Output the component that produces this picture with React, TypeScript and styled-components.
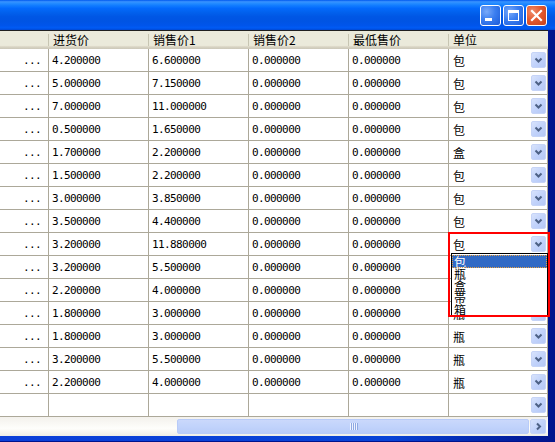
import React from 'react';
import styled, { createGlobalStyle } from 'styled-components';

const GlobalStyle = createGlobalStyle`
  html, body {
    margin: 0;
    padding: 0;
    background: #ffffff;
  }
  body {
    width: 555px;
    height: 442px;
    overflow: hidden;
  }
`;

const CJK = `"Noto Sans CJK SC", "Noto Sans", sans-serif`;
const MONO = `"DejaVu Sans Mono", "Liberation Mono", monospace`;

type Row = [string, string, string, string, string];

const rows: Row[] = [
    ['4.200000', '6.600000', '0.000000', '0.000000', '包'],
    ['5.000000', '7.150000', '0.000000', '0.000000', '包'],
    ['7.000000', '11.000000', '0.000000', '0.000000', '包'],
    ['0.500000', '1.650000', '0.000000', '0.000000', '包'],
    ['1.700000', '2.200000', '0.000000', '0.000000', '盒'],
    ['1.500000', '2.200000', '0.000000', '0.000000', '包'],
    ['3.000000', '3.850000', '0.000000', '0.000000', '包'],
    ['3.500000', '4.400000', '0.000000', '0.000000', '包'],
    ['3.200000', '11.880000', '0.000000', '0.000000', '包'],
    ['3.200000', '5.500000', '0.000000', '0.000000', '瓶'],
    ['2.200000', '4.000000', '0.000000', '0.000000', '瓶'],
    ['1.800000', '3.000000', '0.000000', '0.000000', '瓶'],
    ['1.800000', '3.000000', '0.000000', '0.000000', '瓶'],
    ['3.200000', '5.500000', '0.000000', '0.000000', '瓶'],
    ['2.200000', '4.000000', '0.000000', '0.000000', '瓶'],
];

const headers = ['', '进货价', '销售价1', '销售价2', '最低售价', '单位'];
const units = ['包', '瓶', '盒', '帯', '箱'];
const OPEN_ROW = 8;

const Chevron = ({ dir = 'down' }: { dir?: 'down' | 'right' }) => (
    <svg width="9" height="9" viewBox="0 0 9 9">
        {dir === 'down' ? (
            <polyline points="1.5,2.5 4.5,5.5 7.5,2.5" fill="none" stroke="#4d6185" strokeWidth="2" />
        ) : (
            <polyline points="3,1.5 6,4.5 3,7.5" fill="none" stroke="#4d6185" strokeWidth="2" />
        )}
    </svg>
);

export default function App() {
    return (
        <>
            <GlobalStyle />
            <Frame>
                <TitleBar>
                    <CaptionButton>
                        <MinGlyph />
                    </CaptionButton>
                    <CaptionButton>
                        <MaxGlyph />
                    </CaptionButton>
                    <CaptionButton $close>
                        <svg width="13" height="13" viewBox="0 0 13 13">
                            <path d="M2 2 L11 11 M11 2 L2 11" stroke="#fff" strokeWidth="2.2" strokeLinecap="square" />
                        </svg>
                    </CaptionButton>
                </TitleBar>
                <Client>
                    <Grid>
                        <HeaderRow>
                            {headers.map((h, i) => (
                                <HeaderCell key={i}>{h}</HeaderCell>
                            ))}
                        </HeaderRow>
                        {rows.map((r, ri) => (
                            <DataRow key={ri}>
                                <Cell $align="right">
                                    <Num>...</Num>
                                </Cell>
                                {r.slice(0, 4).map((v, ci) => (
                                    <Cell key={ci}>
                                        <Num>{v}</Num>
                                    </Cell>
                                ))}
                                <ComboCell>
                                    <UnitText>{r[4]}</UnitText>
                                    <DropButton>
                                        <Chevron />
                                    </DropButton>
                                    {ri === OPEN_ROW && (
                                        <>
                                            <DropList>
                                                {units.map((u, ui) => (
                                                    <ListItem key={u} $selected={ui === 0}>
                                                        {u}
                                                    </ListItem>
                                                ))}
                                            </DropList>
                                            <Highlight />
                                        </>
                                    )}
                                </ComboCell>
                            </DataRow>
                        ))}
                        <DataRow>
                            <Cell />
                            <Cell />
                            <Cell />
                            <Cell />
                            <Cell />
                            <ComboCell>
                                <UnitText />
                                <DropButton>
                                    <Chevron />
                                </DropButton>
                            </ComboCell>
                        </DataRow>
                    </Grid>
                    <HScroll>
                        <Track />
                        <Thumb>
                            <Gripper>
                                <i />
                                <i />
                                <i />
                                <i />
                            </Gripper>
                        </Thumb>
                        <ArrowButton>
                            <Chevron dir="right" />
                        </ArrowButton>
                    </HScroll>
                </Client>
            </Frame>
        </>
    );
}

const Frame = styled.div`
    width: 555px;
    height: 442px;
    display: flex;
    flex-direction: column;
    box-sizing: border-box;
    padding: 0 7px 6px 0;
    background: linear-gradient(to right, #0a3fd8 0%, #0843d6 70%, #00138c 100%);
    box-shadow: inset 0 -1px 0 #00138c;
`;

const TitleBar = styled.div`
    height: 30px;
    margin-right: -7px;
    display: flex;
    justify-content: flex-end;
    align-items: flex-start;
    gap: 1px;
    padding: 5px 8px 0 0;
    box-sizing: border-box;
    background: linear-gradient(
        to bottom,
        #0058ee 0%,
        #3a93ff 6%,
        #288eff 10%,
        #127dff 18%,
        #0369fc 28%,
        #0262ee 40%,
        #0057e5 55%,
        #0054e3 70%,
        #0055eb 85%,
        #005bf5 93%,
        #0048d4 100%
    );
`;

const CaptionButton = styled.div<{ $close?: boolean }>`
    width: 21px;
    height: 21px;
    box-sizing: border-box;
    border: 1px solid #ffffff;
    border-radius: 3px;
    margin-left: 1px;
    display: flex;
    align-items: center;
    justify-content: center;
    position: relative;
    background: ${(p) =>
        p.$close
            ? 'radial-gradient(circle at 30% 30%, #f08d6c 0%, #e35a30 45%, #c8401a 100%)'
            : 'radial-gradient(circle at 30% 30%, #7aaaf9 0%, #3b7ef0 45%, #1c5bd8 100%)'};
`;

const MinGlyph = styled.span`
    position: absolute;
    left: 4px;
    bottom: 4px;
    width: 7px;
    height: 3px;
    background: #ffffff;
`;

const MaxGlyph = styled.span`
    width: 11px;
    height: 11px;
    box-sizing: border-box;
    border: 1px solid #ffffff;
    border-top-width: 3px;
`;

const Client = styled.div`
    flex: 1;
    display: flex;
    flex-direction: column;
    background: #ffffff;
    border-top: 1px solid #202020;
`;

const Grid = styled.div`
    display: flex;
    flex-direction: column;
`;

const HeaderRow = styled.div`
    height: 18px;
    display: grid;
    grid-template-columns: 49px 100px 100px 100px 100px 99px;
    background: linear-gradient(to bottom, #ebeadb 0%, #ebeadb 80%, #e2decd 84%, #d6d2c2 90%, #cbc7b8 100%);
`;

const HeaderCell = styled.div`
    position: relative;
    font-family: ${CJK};
    font-size: 12px;
    line-height: 18px;
    color: #000000;
    padding-left: 4px;
    white-space: nowrap;
    &::before {
        content: '';
        position: absolute;
        left: -1px;
        top: 3px;
        bottom: 3px;
        width: 1px;
        background: #c7c5b2;
    }
    &:first-child::before {
        display: none;
    }
`;

const DataRow = styled.div`
    height: 23px;
    box-sizing: border-box;
    display: grid;
    grid-template-columns: 49px 100px 100px 100px 100px 99px;
    border-bottom: 1px solid #aca899;
`;

const Cell = styled.div<{ $align?: 'left' | 'right' }>`
    display: flex;
    align-items: center;
    justify-content: ${(p) => (p.$align === 'right' ? 'flex-end' : 'flex-start')};
    padding: 0 ${(p) => (p.$align === 'right' ? '7px' : '0')} 0 3px;
    border-right: 1px solid #aca899;
    overflow: hidden;
`;

const Num = styled.span`
    font-family: ${MONO};
    font-size: 11px;
    letter-spacing: -0.6px;
    color: #000000;
    white-space: nowrap;
`;

const ComboCell = styled.div`
    position: relative;
    display: flex;
    align-items: center;
    justify-content: space-between;
    padding-left: 4px;
    padding-right: 1px;
    border-right: 1px solid #aca899;
`;

const UnitText = styled.span`
    font-family: ${CJK};
    font-size: 12px;
    color: #000000;
`;

const DropButton = styled.div`
    width: 15px;
    height: 16px;
    box-sizing: border-box;
    display: flex;
    align-items: center;
    justify-content: center;
    border: 1px solid #c6d4f7;
    border-radius: 2px;
    background: linear-gradient(to bottom right, #d8e3fc 0%, #c2d3fb 50%, #b5c8f6 100%);
`;

const DropList = styled.div`
    position: absolute;
    left: 2px;
    top: 20px;
    width: 97px;
    height: 63px;
    box-sizing: border-box;
    border: 1px solid #000000;
    background: #ffffff;
    z-index: 5;
    display: flex;
    flex-direction: column;
    padding-top: 1px;
`;

const ListItem = styled.div<{ $selected?: boolean }>`
    height: 12px;
    line-height: 12px;
    padding-left: 2px;
    font-family: ${CJK};
    font-size: 12px;
    color: ${(p) => (p.$selected ? '#ffffff' : '#000000')};
    background: ${(p) => (p.$selected ? '#316ac5' : 'transparent')};
    outline: ${(p) => (p.$selected ? '1px dotted #e8a040' : 'none')};
    outline-offset: -1px;
    ${(p) => p.$selected && 'height: 13px; line-height: 13px;'}
`;

const Highlight = styled.div`
    position: absolute;
    left: -1px;
    top: -1px;
    width: 102px;
    height: 85px;
    box-sizing: border-box;
    border: 2px solid #ff0000;
    z-index: 6;
    pointer-events: none;
`;

const HScroll = styled.div`
    height: 19px;
    width: 548px;
    display: flex;
    align-items: center;
    background: linear-gradient(to bottom, #f3f1ec 0%, #fefefb 60%, #eeede5 100%);
`;

const Track = styled.div`
    width: 177px;
    height: 100%;
`;

const Thumb = styled.div`
    width: 352px;
    height: 15px;
    box-sizing: border-box;
    border: 1px solid #b8cbf8;
    border-radius: 2px;
    background: linear-gradient(to bottom, #cad8fb 0%, #c1d3fb 50%, #b9ccf8 100%);
    display: flex;
    align-items: center;
    justify-content: center;
`;

const Gripper = styled.div`
    display: flex;
    gap: 1px;
    i {
        width: 1px;
        height: 7px;
        background: #eef3ff;
        box-shadow: 1px 0 0 #8fa9e3;
    }
`;

const ArrowButton = styled.div`
    width: 16px;
    height: 15px;
    margin-left: 1px;
    box-sizing: border-box;
    border: 1px solid #c6d4f7;
    border-radius: 2px;
    background: linear-gradient(to bottom right, #d8e3fc 0%, #c2d3fb 50%, #b5c8f6 100%);
    display: flex;
    align-items: center;
    justify-content: center;
`;
